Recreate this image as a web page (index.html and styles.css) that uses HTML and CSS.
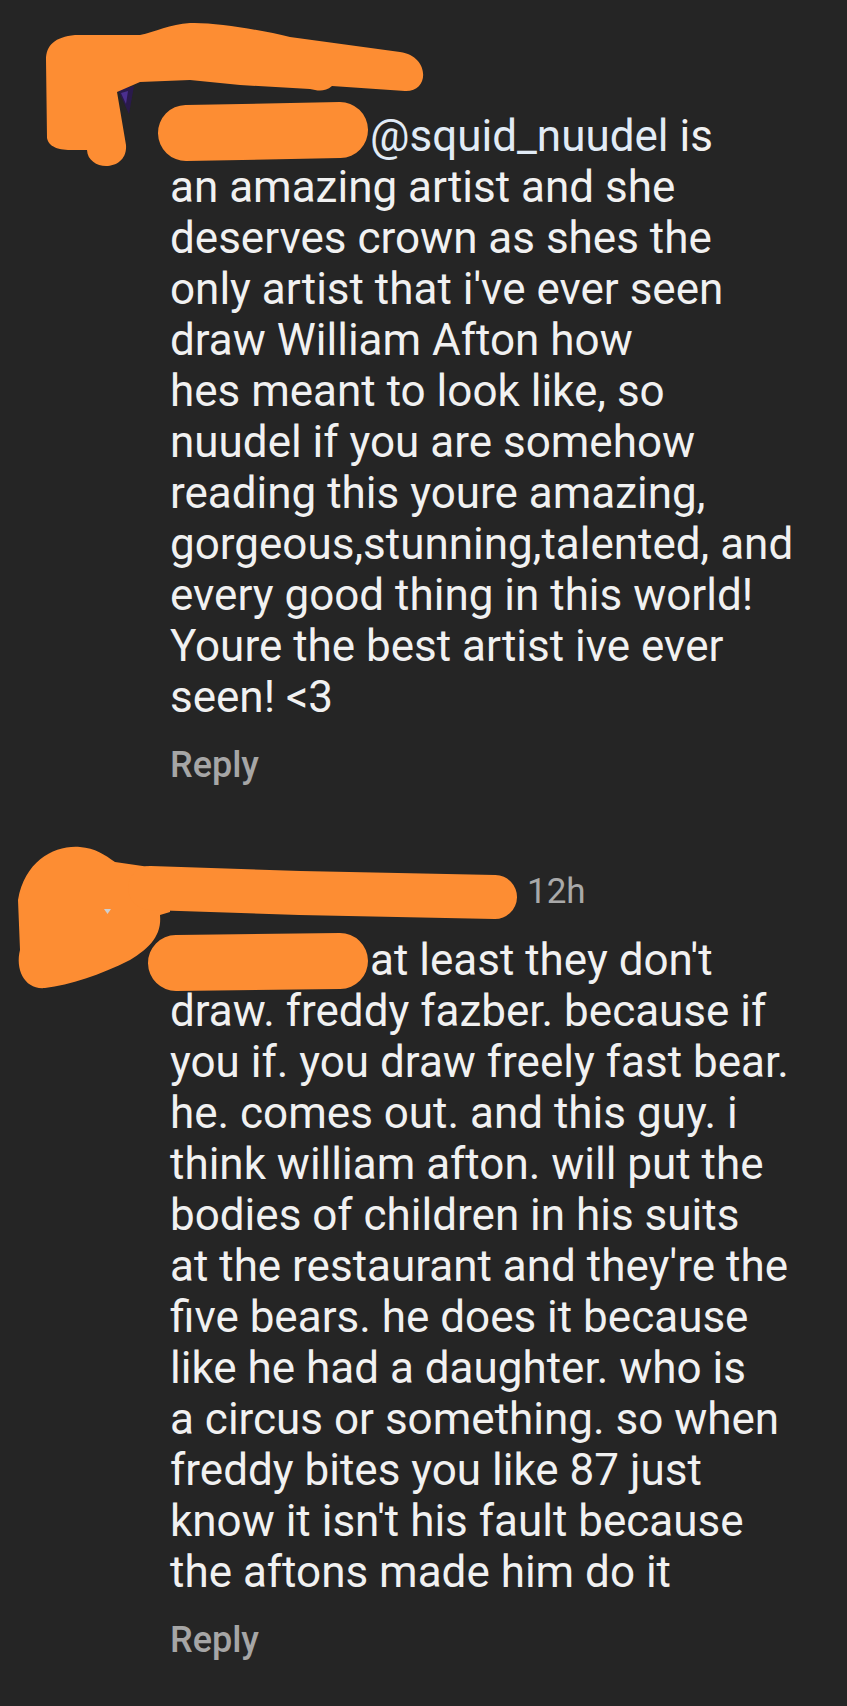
FILE: index.html
```html
<!DOCTYPE html>
<html lang="en">
<head>
<meta charset="utf-8">
<title>Comments</title>
<link rel="stylesheet" href="styles.css">
</head>
<body>
<main class="thread">
  <article class="comment comment-first">
    <div class="content">
      <div class="header"><span class="redacted redacted-name-long"></span></div>
      <p class="body"><span class="redacted redacted-reply"></span><span class="mention">@squid_nuudel</span> is<br>an amazing artist and she<br>deserves crown as shes the<br>only artist that i've ever seen<br>draw William Afton how<br>hes meant to look like, so<br>nuudel if you are somehow<br>reading this youre amazing,<br>gorgeous,stunning,talented, and<br>every good thing in this world!<br>Youre the best artist ive ever<br>seen! &lt;3</p>
      <div class="actions"><span class="reply">Reply</span></div>
    </div>
    <svg class="scribble" width="847" height="200" viewBox="0 0 847 200" aria-hidden="true">
      <polygon points="118,90 134,86 129,114" fill="#2a1a4c"/>
      <polygon points="121,93 128,91 126,104" fill="#4b2f8f"/>
      <path fill="#fd8d33" d="M46 60 C46 45 55 37 75 35 L140 35 C155 32 170 24 190 23 C215 22 260 30 290 37 L400 52 C430 56 430 92 405 91 L332 86 C325 92 318 91 310 89 L240 85 L190 80 L140 82 L117 92 L126 145 C128 172 88 172 87 150 C70 150 50 152 47 138 Z"/>
      <path d="M186 133 L340 130" stroke="#fd8d33" stroke-width="56" stroke-linecap="round" fill="none"/>
    </svg>
  </article>
  <article class="comment comment-second">
    <div class="content">
      <div class="header"><span class="redacted redacted-name"></span><span class="time">12h</span></div>
      <p class="body"><span class="redacted redacted-reply"></span>at least they don't<br>draw. freddy fazber. because if<br>you if. you draw freely fast bear.<br>he. comes out. and this guy. i<br>think william afton. will put the<br>bodies of children in his suits<br>at the restaurant and they're the<br>five bears. he does it because<br>like he had a daughter. who is<br>a circus or something. so when<br>freddy bites you like 87 just<br>know it isn't his fault because<br>the aftons made him do it</p>
      <div class="actions"><span class="reply">Reply</span></div>
    </div>
    <svg class="scribble" width="847" height="200" viewBox="0 824 847 200" aria-hidden="true">
      <path fill="#fd8d33" d="M18 900 C25 860 55 845 80 847 C95 848 105 855 115 862 L170 870 L170 912 L160 915 C162 935 150 948 130 960 C100 975 70 985 45 988 C25 990 15 970 20 950 Z"/>
      <g stroke="#fd8d33" stroke-linecap="round" stroke-linejoin="round" fill="none">
        <path d="M150 888 L300 893 L495 897" stroke-width="44"/>
        <path d="M176 963 L340 961" stroke-width="56"/>
      </g>
      <polygon points="104,909 111,909 107.5,914" fill="#cfcfcf"/>
    </svg>
  </article>
</main>
</body>
</html>
```
FILE: styles.css
```css
html, body {
  margin: 0;
  padding: 0;
  background: #252525;
}

body {
  font-family: Roboto, "Noto Sans", "Liberation Sans", sans-serif;
  color: #f1f1f1;
  width: 847px;
  min-height: 1706px;
}

.thread {
  display: flex;
  flex-direction: column;
}

.comment {
  position: relative;
  padding: 43px 0 34px 170px;
}

.content {
  display: flex;
  flex-direction: column;
}

.header {
  display: flex;
  align-items: center;
  height: 50px;
}

.redacted {
  display: inline-block;
}

.redacted-name-long {
  width: 250px;
}

.redacted-name {
  width: 357px;
}

.redacted-reply {
  width: 200px;
}

.time {
  font-size: 35px;
  line-height: 50px;
  color: #a9a9a9;
}

.body {
  margin: 18px 0 0;
  font-size: 44px;
  line-height: 51px;
  white-space: nowrap;
  color: #f1f1f1;
}

.mention {
  color: #e1ebf6;
}

.actions {
  margin-top: 17px;
  height: 50px;
  display: flex;
  align-items: center;
}

.reply {
  font-size: 36px;
  font-weight: 500;
  line-height: 50px;
  color: #a6a6a6;
}

.scribble {
  position: absolute;
  left: 0;
  top: 0;
  pointer-events: none;
}
```
